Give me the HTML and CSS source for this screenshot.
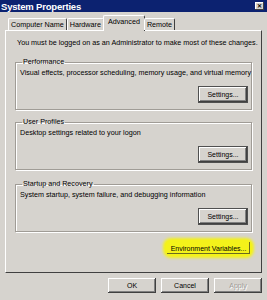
FILE: index.html
```html
<!DOCTYPE html>
<html lang="en">
<head>
    <meta charset="UTF-8">
    <title>System Properties</title>
    <link rel="stylesheet" href="styles.css">
</head>
<body>
    <div class="window">
        <div class="titlebar">
            <span class="title">System Properties</span>
            <span class="close-btn">&#x2715;</span>
        </div>

        <div class="tabs">
            <div class="tab">Computer Name</div>
            <div class="tab">Hardware</div>
            <div class="tab active">Advanced</div>
            <div class="tab">Remote</div>
        </div>

        <div class="panel">
            <p class="note">You must be logged on as an Administrator to make most of these changes.</p>

            <fieldset class="group">
                <legend>Performance</legend>
                <div class="group-text">Visual effects, processor scheduling, memory usage, and virtual memory</div>
                <div class="group-actions">
                    <button class="btn btn-dark">Settings...</button>
                </div>
            </fieldset>

            <fieldset class="group">
                <legend>User Profiles</legend>
                <div class="group-text">Desktop settings related to your logon</div>
                <div class="group-actions">
                    <button class="btn btn-dark">Settings...</button>
                </div>
            </fieldset>

            <fieldset class="group">
                <legend>Startup and Recovery</legend>
                <div class="group-text">System startup, system failure, and debugging information</div>
                <div class="group-actions">
                    <button class="btn btn-dark">Settings...</button>
                </div>
            </fieldset>

            <div class="env-row">
                <span class="highlight">
                    <button class="btn env-btn">Environment Variables...</button>
                </span>
            </div>
        </div>

        <div class="dialog-buttons">
            <button class="btn">OK</button>
            <button class="btn">Cancel</button>
            <button class="btn disabled">Apply</button>
        </div>
    </div>
</body>
</html>
```

FILE: styles.css
```css
body {
    margin: 0;
    padding: 0;
    background: #d6d3ce;
    font-family: "Liberation Sans", Arial, sans-serif;
    font-size: 7px;
    color: #000;
}

.window {
    width: 267px;
    height: 300px;
    background: #d6d3ce;
    box-sizing: border-box;
    overflow: hidden;
}

.titlebar {
    height: 12px;
    background: #0c2270;
    display: flex;
    align-items: center;
    justify-content: space-between;
    padding: 0 3px 0 1px;
}

.title {
    color: #fff;
    font-weight: 700;
    font-size: 9.5px;
    letter-spacing: -0.2px;
}

.close-btn {
    width: 9px;
    height: 8px;
    background: #d6d3ce;
    color: #000;
    font-size: 6px;
    font-weight: 700;
    line-height: 8px;
    text-align: center;
    box-shadow: inset -1px -1px #404040, inset 1px 1px #fff;
}

.tabs {
    display: flex;
    align-items: flex-end;
    margin: 6px 0 0 8px;
    height: 12px;
    position: relative;
    z-index: 1;
}

.tab {
    height: 11px;
    line-height: 12px;
    padding: 0 2px;
    border: 1px solid #fff;
    border-right-color: #404040;
    border-bottom: none;
    border-radius: 2px 2px 0 0;
    background: #d6d3ce;
    font-size: 7.2px;
    white-space: nowrap;
}

.tab.active {
    height: 13px;
    line-height: 11px;
    margin: 0 -1px -1px;
    padding: 0 4px 2px;
}

.panel {
    margin: 0 5px;
    height: 243px;
    border: 1px solid #fff;
    border-right-color: #404040;
    border-bottom-color: #404040;
    box-sizing: border-box;
    padding: 7px 9px 0 9px;
}

.note {
    margin: 0 0 11px 2px;
    font-size: 7.2px;
    line-height: 9px;
    white-space: nowrap;
}

.group {
    margin: 0 0 8px 0;
    padding: 2px 4px 7px 4px;
    border: 1px solid #a09c96;
    box-shadow: inset 1px 1px #fff, 1px 1px #fff;
    min-width: 0;
}

.group:nth-of-type(2) {
    margin-bottom: 10px;
}

.group legend {
    padding: 0 1px;
    margin-left: 2px;
    font-size: 7.2px;
    line-height: 8px;
}

.group-text {
    line-height: 9px;
    font-size: 7.2px;
    white-space: nowrap;
}

.group-actions {
    display: flex;
    justify-content: flex-end;
    margin-top: 10px;
}

.btn {
    width: 48px;
    height: 15px;
    padding: 0;
    border: none;
    background: #d6d3ce;
    font-family: "Liberation Sans", Arial, sans-serif;
    font-size: 7px;
    color: #000;
    white-space: nowrap;
    box-shadow: inset -1px -1px #404040, inset 1px 1px #fff, inset -2px -2px #808080;
}

.btn-dark {
    box-shadow: 0 0 0 1px #505050, inset -1px -1px #404040, inset 1px 1px #fff, inset -2px -2px #808080;
}

.btn.disabled {
    color: #a09c96;
    text-shadow: 1px 1px #fff;
}

.env-row {
    display: flex;
    justify-content: flex-end;
    margin-top: 6px;
}

.highlight {
    display: inline-block;
    background: #f4f21a;
    border-radius: 6px;
    padding: 2px;
    box-shadow: 0 0 3px 2px #f4f21a;
}

.env-btn {
    width: 83px;
    height: 12px;
    background: #f4f21a;
    box-shadow: inset -1px -1px #6a6a20;
}

.dialog-buttons {
    display: flex;
    justify-content: flex-end;
    gap: 5px;
    padding: 5px 5px 0 0;
}
```
